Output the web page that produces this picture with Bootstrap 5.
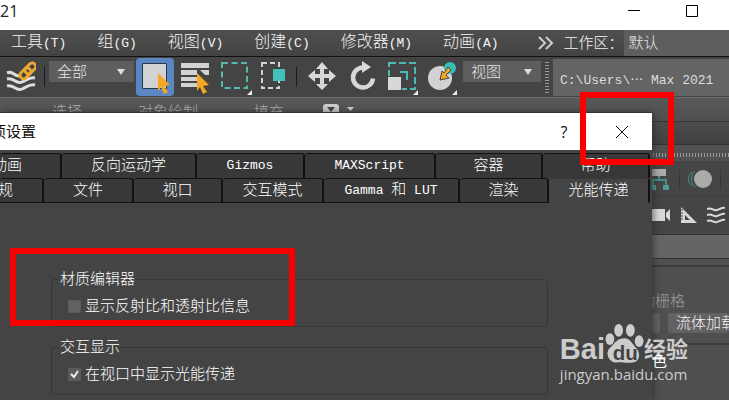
<!DOCTYPE html>
<html lang="zh-CN">
<head>
<meta charset="utf-8">
<meta name="viewport" content="width=device-width, initial-scale=1">
<title>首选项设置</title>
<link href="https://cdn.jsdelivr.net/npm/bootstrap@5.3.0/dist/css/bootstrap.min.css" rel="stylesheet">
<script src="https://cdn.jsdelivr.net/npm/bootstrap@5.3.0/dist/js/bootstrap.bundle.min.js"></script>
<style>
  body { font: 300 15px/16px "Liberation Sans", "Noto Sans CJK SC", sans-serif; color: #f4f4f4; background: #515151; }
  button { background: none; border: 0; padding: 0; color: inherit; font: inherit; }
  svg { display: block; flex: none; }
  .half { font-family: "Liberation Mono", monospace; font-size: 13px; font-weight: 400; }
  .desk { height: 100vh; }

  .titlebar { height: 30px; color: #222; background: #fff; padding: 0 31px 8px 0; gap: 46px; font: 400 16px/20px "Open Sans", sans-serif; }

  .menubar { height: 27px; background: linear-gradient(#4f4f4f, #434343); border-bottom: 1px solid #111; padding-left: 11px; }
  .menu-items { gap: 31px; font-size: 16px; }
  .menu-items a { color: #f4f4f4; text-decoration: none; }
  .more-btn { margin: 0 6px 0 11px; padding-left: 4px; }

  .drop { appearance: none; border: 0; border-radius: 0; color: #e6e6e6; font: inherit; padding: 0 8px; background: #5e5e5e; }
  .drop-space { padding: 0 5px; }
  .drop-arrow { height: 21px; background: #5e5e5e url("data:image/svg+xml,%3Csvg xmlns='http://www.w3.org/2000/svg' width='8' height='6'%3E%3Cpath d='M0 0h8L4 6z' fill='%23ddd'/%3E%3C/svg%3E") no-repeat right 9px center; }
  .drop-filter { width: 85px; }
  .drop-coord { width: 78px; margin-left: 6px; }

  .toolbar { height: 40px; background: #444; padding-left: 6px; }
  .tools { gap: 1px; height: 38px; margin-left: 2px; }
  .tool-on { background: #5a86c2; border-radius: 4px; }
  .sep { width: 1px; height: 20px; background: #1c1c1c; }
  .side .sep { background: #383838; }
  .grip { width: 4px; height: 33px; background: radial-gradient(circle, #999 0 1px, transparent 1px) 0 0 / 2px 3px; }
  .path-box { height: 37px; min-width: 0; border: 0; border-radius: 0; color: #ddd; background: #646464; padding: 2px 0 0 7px; font-family: "Liberation Mono", "Noto Sans CJK SC", monospace; font-size: 13px; font-weight: 400; }

  .ribbon { height: 25px; background: linear-gradient(#595959, #4f4f4f); border-top: 1px solid #6a6a6a; border-bottom: 1px solid #333; color: #b0b0b0; padding: 6px 0 0 52px; gap: 56px; }
  .ribbon-state { margin-left: -17px; }

  .dialog { top: 112px; left: 0; right: 77px; bottom: 0; background: #444; border-top: 1px solid #333; box-shadow: 2px 0 6px #2228; }
  .dlg-title { height: 37px; background: #fff; color: #111; font-weight: 400; }
  .dlg-name { width: 36px; }
  .dlg-help { width: 56px; font: 400 16px/20px "Open Sans", sans-serif; }
  .dlg-close { width: 60px; }
  .tabs { padding: 3px 2px 0 0; }
  .tab-row { display: grid; height: 25px; }
  .row-top { grid-template-columns: 62fr 135fr 108fr 131fr 107fr 107fr; }
  .row-low { grid-template-columns: 44fr 90fr 89fr 101fr 136fr 89fr 101fr; }
  .tab { background: #383838; border: 1px solid #111; border-left: 0; border-right-width: 2px; border-radius: 3px 3px 0 0; white-space: nowrap; overflow: hidden; color: #fff; padding-bottom: 2px; }
  .row-top .tab { border-bottom: 0; }
  .row-low .tab-on { background: #444; border-bottom-color: #444; border-top-color: #383838; }
  .cut-a { padding-right: 38px; }
  .cut-b { padding-right: 29px; }

  .page { padding: 68px 104px 0 51px; gap: 12px; }
  .group { border: 1px solid #373737; border-radius: 3px; padding: 10px 16px 11px; color: #fff; }
  .group legend { float: none; width: auto; font-size: 15px; line-height: 16px; margin: 0 0 0 -9px; padding: 0 1px; }
  .group label { line-height: 18px; }
  .tick { appearance: none; width: 13px; height: 13px; margin: 0; background: #626262; border: 1px solid #595959; }
  .tick:checked { background: #5c5c5c url("data:image/svg+xml,%3Csvg xmlns='http://www.w3.org/2000/svg' viewBox='0 0 11 11'%3E%3Cpath d='M2 5l3 3 4-6' fill='none' stroke='%23eee' stroke-width='2'/%3E%3C/svg%3E"); }

  .side { width: 77px; }
  .side-head { height: 23px; background: linear-gradient(#4c4c4c, #404040); border-bottom: 1px solid #333; }
  .side-grip { height: 4px; margin: 8px 0 4px; background: radial-gradient(circle, #999 0 1px, transparent 1px) 0 0 / 3px 2px; }
  .side-icons { height: 73px; background: #454545; }
  .side-row { height: 36px; border-bottom: 1px solid #3c3c3c; }
  .side-row + .side-row { border-bottom: 0; }
  .side-drop { height: 25px; background: #656565; border-top: 1px solid #333; border-bottom: 1px solid #333; }
  .side-sect { background: #4f4f4f; border-top: 2px solid #3c3c3c; }
  .sect-type { height: 78px; margin-top: 6px; padding-top: 26px; }
  .auto-grid { color: #9c9c9c; width: 33px; height: 16px; }
  .obj-btn { height: 20px; background: #626262; border-radius: 3px; }
  .obj-first { width: 9px; }
  .obj-next { padding-left: 8px; white-space: nowrap; overflow: hidden; }
  .sect-color { padding-top: 8px; }
  .color-label { width: 15px; height: 16px; color: #fff; font-weight: 400; }

  .mark-box { border: 6px solid #f80000; pointer-events: none; }
  .mark-close { top: 92px; right: 55px; width: 94px; height: 73px; }
  .mark-group { top: 248px; left: 10px; width: 285px; height: 78px; }

  .stamp { right: 41px; bottom: 16px; color: #ccc; white-space: nowrap; }
  .stamp-name { font: bold 29px/30px "Liberation Sans", sans-serif; height: 42px; }
  .stamp-cn { font: bold 22px/34px "Noto Sans CJK SC", sans-serif; }
  .stamp-url { font: 400 15px/20px "Open Sans", sans-serif; }
</style>
</head>
<body>
<div class="desk position-relative overflow-hidden d-flex flex-column">
  <header class="titlebar d-flex align-items-center">
    <span class="me-auto">21</span>
    <button aria-label="最小化"><svg width="12" height="12"><path d="M0 5.500h12" stroke="#000"/></svg></button>
    <button aria-label="最大化"><svg width="12" height="12"><path d="M.5.500h11v11H.5z" fill="none" stroke="#000"/></svg></button>
  </header>

  <nav class="menubar d-flex align-items-center">
    <div class="menu-items d-flex text-nowrap">
      <a href="#">工具<span class="half">(T)</span></a>
      <a href="#">组<span class="half">(G)</span></a>
      <a href="#">视图<span class="half">(V)</span></a>
      <a href="#">创建<span class="half">(C)</span></a>
      <a href="#">修改器<span class="half">(M)</span></a>
      <a href="#">动画<span class="half">(A)</span></a>
    </div>
    <div class="d-flex flex-grow-1 align-items-center align-self-stretch ps-4">
      <button class="more-btn" aria-label="更多"><svg width="16" height="14"><path d="M1 1l6 6-6 6M8 1l6 6-6 6" fill="none" stroke="#ccc" stroke-width="2"/></svg></button>
      <label for="ws" class="text-nowrap ms-1">工作区：</label>
      <select id="ws" class="drop drop-space flex-grow-1 align-self-stretch"><option>默认</option></select>
    </div>
  </nav>

  <div class="toolbar d-flex align-items-center">
    <button aria-label="绑定到空间扭曲"><svg width="30" height="32" fill="none"><path d="M1 12c6-3 7 4 13 3M1 18c7-2 9 6 15 3s8-5 13-4M1 25c7-2 9 6 15 3s8-5 13-4" stroke="#ddd" stroke-width="3"/><g stroke="#efa72e" stroke-width="3"><rect x="13" y="9" width="12" height="7" rx="3" transform="rotate(-45 19 12)"/><rect x="18" y="4" width="12" height="7" rx="3" transform="rotate(-45 24 7)"/></g></svg></button>
    <span class="sep ms-2 me-1"></span>
    <select class="drop drop-arrow drop-filter align-self-start mt-1" aria-label="选择过滤器"><option>全部</option></select>
    <div class="tools d-flex">
      <button class="tool-on" aria-label="选择对象"><svg width="38" height="38"><path d="M6.500 5.500h24v25h-24z" fill="#d2d2d2" stroke="#26384f"/><path d="M22 15l12 12-6 1 4 6-4 2-3-7-3 4z" fill="#f5a623"/></svg></button>
      <button aria-label="按名称选择"><svg width="38" height="38"><path d="M6 5h28v5H6zM6 12h16v5H6zM6 19h17v4H6zM6 25h17v4H6zM25 12h9v5h-4z" fill="#d2d2d2"/><path d="M22 15l12 12-6 1 4 6-4 2-3-7-3 4z" fill="#f5a623"/></svg></button>
      <button aria-label="矩形选择区域"><svg width="38" height="38"><path d="M8 5h25v25H8z" fill="none" stroke="#55b8ae" stroke-width="2" stroke-dasharray="6 3.500"/><path d="M38 32v5h-5z" fill="#eee"/></svg></button>
      <button aria-label="窗口/交叉"><svg width="38" height="38"><path d="M9 5h17v25H9z" fill="none" stroke="#d2d2d2" stroke-width="2" stroke-dasharray="5 3"/><path d="M19 10h13v13H19z" fill="#444"/><path d="M20 11h12v12H20z" fill="#45c1bd"/></svg></button>
      <span class="sep align-self-center mx-1"></span>
      <button aria-label="移动"><svg width="38" height="38"><path d="M20 4l6 7h-4v5h5v-4l7 6-7 6v-4h-5v6h4l-6 6-6-6h4v-6h-5v4l-7-6 7-6v4h5v-5h-4z" fill="#d8d8d8"/></svg></button>
      <button aria-label="旋转"><svg width="38" height="38"><path d="M22 9.500a10 10 0 1 0 10 11" fill="none" stroke="#d8d8d8" stroke-width="4.500"/><path d="M21 3l9 6-9 6z" fill="#d8d8d8"/></svg></button>
      <button aria-label="缩放"><svg width="38" height="38"><path d="M9 5h26v26H9z" fill="none" stroke="#4bbab4" stroke-width="2" stroke-dasharray="7 3"/><path d="M20 14h7v8" fill="none" stroke="#4bbab4" stroke-width="2"/><path d="M7 18h15v14H7z" fill="#444"/><path d="M8 19h13v13H8z" fill="#d8d8d8"/><path d="M38 32v5h-5z" fill="#eee"/></svg></button>
      <button aria-label="放置"><svg width="38" height="38"><circle cx="21" cy="20" r="12" fill="#d2d2d2"/><circle cx="31" cy="10" r="6" fill="#36bdb5"/><path d="M29 9l3 3-5 5 3 3-9 2 2-9 2 2z" fill="#f5a623" stroke="#444"/><path d="M38 32v5h-5z" fill="#eee"/></svg></button>
    </div>
    <select class="drop drop-arrow drop-coord align-self-start mt-1" aria-label="参考坐标系"><option>视图</option></select>
    <span class="grip mx-1"></span>
    <input class="path-box flex-grow-1" aria-label="项目路径" value="C:\Users\⋯ Max 2021">
  </div>

  <div class="ribbon d-flex">
    <span>选择</span><span>对象绘制</span><span>填充</span>
    <svg class="ribbon-state" width="32" height="12"><rect width="16" height="12" rx="3" fill="#ccc"/><path d="M4 3h8l-4 5z" fill="#444"/><path d="M24 3h7l-3.500 4z" fill="#ccc"/></svg>
  </div>

  <aside class="side ms-auto flex-grow-1 d-flex flex-column">
    <div class="side-head"></div>
    <div class="side-grip"></div>
    <div class="side-icons">
      <div class="side-row d-flex align-items-center justify-content-between pe-2">
        <svg width="19" height="24"><path d="M0 2h14v7H0z" fill="#aaa"/><path d="M7 9v4M1 19v-6h13v6" fill="none" stroke="#438f89" stroke-width="2"/><path d="M0 18h4v5H0zM11 18h6v5h-6z" fill="#4c9c95"/></svg>
        <span class="sep"></span>
        <svg width="24" height="20" fill="none"><circle cx="15" cy="10" r="9" fill="#aaa"/><path d="M7 2c-5 4-5 12 0 16M4 3c-5 4-5 10 0 14" stroke="#438f89"/></svg>
        <span class="sep"></span>
      </div>
      <div class="side-row d-flex align-items-center justify-content-between pe-1">
        <svg width="18" height="16"><path d="M0 2h13v12H0zM14 6l4-4v12l-4-4z" fill="#d8d8d8"/></svg>
        <svg width="17" height="17"><path d="M1 0l16 16H1zM5 8v5h5z" fill="#d8d8d8" fill-rule="evenodd"/><path d="M1 3h2M1 6h2M1 9h2M1 12h2" stroke="#444"/></svg>
        <svg width="18" height="18"><path d="M0 3c5-2 6 2 10 1s5-3 8-2M0 9c5-2 6 2 10 1s5-3 8-2M0 15c5-2 6 2 10 1s5-3 8-2" fill="none" stroke="#d8d8d8" stroke-width="2"/></svg>
      </div>
    </div>
    <div class="side-drop"></div>
    <div class="side-sect sect-type">
      <div class="auto-grid d-flex justify-content-end overflow-hidden text-nowrap">自动栅格</div>
      <div class="d-flex gap-2 mt-1">
        <button class="obj-btn obj-first" aria-label="长方体"></button>
        <button class="obj-btn obj-next flex-grow-1 text-start">流体加载</button>
      </div>
    </div>
    <div class="side-sect sect-color flex-grow-1"><div class="color-label position-relative z-1">色</div></div>
  </aside>

  <section class="dialog position-absolute" role="dialog" aria-label="首选项设置">
    <div class="dlg-title d-flex align-items-center">
      <div class="dlg-name d-flex justify-content-end overflow-hidden text-nowrap me-auto">首选项设置</div>
      <button class="dlg-help" aria-label="帮助">?</button>
      <button class="dlg-close d-flex justify-content-center" aria-label="关闭"><svg width="12" height="12"><path d="M0 0l12 12M12 0L0 12" stroke="#111"/></svg></button>
    </div>
    <div class="tabs">
      <div class="tab-row row-top">
        <button class="tab cut-a d-flex align-items-center justify-content-end">动画</button>
        <button class="tab">反向运动学</button>
        <button class="tab"><span class="half">Gizmos</span></button>
        <button class="tab"><span class="half">MAXScript</span></button>
        <button class="tab">容器</button>
        <button class="tab">帮助</button>
      </div>
      <div class="tab-row row-low">
        <button class="tab cut-b d-flex align-items-center justify-content-end">常规</button>
        <button class="tab">文件</button>
        <button class="tab">视口</button>
        <button class="tab">交互模式</button>
        <button class="tab"><span class="half">Gamma </span>和<span class="half"> LUT</span></button>
        <button class="tab">渲染</button>
        <button class="tab tab-on">光能传递</button>
      </div>
    </div>
    <div class="page d-flex flex-column">
      <fieldset class="group">
        <legend>材质编辑器</legend>
        <div class="d-flex align-items-center gap-1"><input type="checkbox" class="tick" id="c1"><label for="c1">显示反射比和透射比信息</label></div>
      </fieldset>
      <fieldset class="group">
        <legend>交互显示</legend>
        <div class="d-flex align-items-center gap-1"><input type="checkbox" class="tick" id="c2" checked><label for="c2">在视口中显示光能传递</label></div>
      </fieldset>
    </div>
  </section>

  <div class="stamp position-absolute">
    <div class="stamp-name d-flex align-items-end">
      <span>Bai</span>
      <svg width="39" height="42" viewBox="0 0 40 42"><g fill="#ccc"><ellipse cx="5" cy="17" rx="4.500" ry="6"/><ellipse cx="14" cy="8" rx="4.500" ry="6.500"/><ellipse cx="26" cy="8" rx="4.500" ry="6.500"/><ellipse cx="35" cy="19" rx="4.500" ry="6"/><path d="M20 16c6 0 8 6 12 10s5 14-4 15-9-1-16 0-13-9-7-15 8-10 15-10z"/></g><text x="8" y="38" font-family="Liberation Sans, sans-serif" font-size="21" font-weight="bold" fill="#444">du</text></svg>
      <span class="stamp-cn">经验</span>
    </div>
    <div class="stamp-url">jingyan.baidu.com</div>
  </div>

  <div class="mark-box mark-close position-absolute"></div>
  <div class="mark-box mark-group position-absolute"></div>
</div>
</body>
</html>
